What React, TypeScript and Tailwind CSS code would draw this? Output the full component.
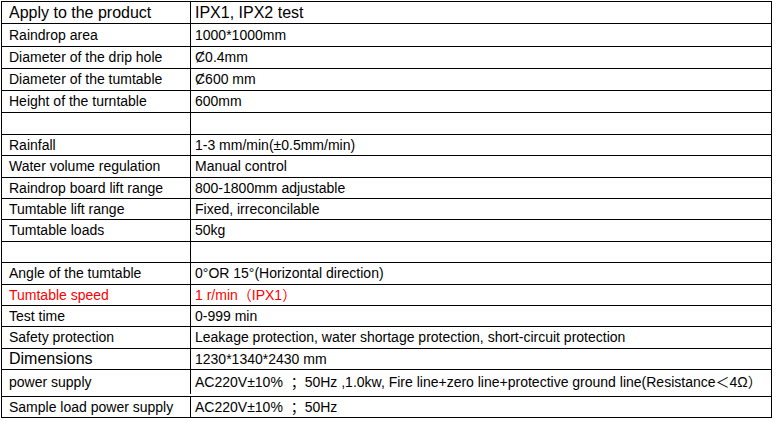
const rows: { label: string; value: string; h: string; big?: boolean; bigValue?: boolean; red?: boolean }[] = [
  { label: 'Apply to the product', value: 'IPX1, IPX2 test', h: 'h-[22px]', big: true, bigValue: true },
  { label: 'Raindrop area', value: '1000*1000mm', h: 'h-[23px]' },
  { label: 'Diameter of the drip hole', value: 'Ȼ0.4mm', h: 'h-[22px]' },
  { label: 'Diameter of the tumtable', value: 'Ȼ600 mm', h: 'h-[22px]' },
  { label: 'Height of the turntable', value: '600mm', h: 'h-[22px]' },
  { label: '', value: '', h: 'h-[22px]' },
  { label: 'Rainfall', value: '1-3 mm/min(±0.5mm/min)', h: 'h-[21px]' },
  { label: 'Water volume regulation', value: 'Manual control', h: 'h-[22px]' },
  { label: 'Raindrop board lift range', value: '800-1800mm adjustable', h: 'h-[21px]' },
  { label: 'Tumtable lift range', value: 'Fixed, irreconcilable', h: 'h-[21px]' },
  { label: 'Tumtable loads', value: '50kg', h: 'h-[22px]' },
  { label: '', value: '', h: 'h-[21px]' },
  { label: 'Angle of the tumtable', value: '0°OR 15°(Horizontal direction)', h: 'h-[22px]' },
  { label: 'Tumtable speed', value: '1 r/min（IPX1）', h: 'h-[21px]', red: true },
  { label: 'Test time', value: '0-999 min', h: 'h-[21px]' },
  { label: 'Safety protection', value: 'Leakage protection, water shortage protection, short-circuit protection', h: 'h-[22px]' },
  { label: 'Dimensions', value: '1230*1340*2430 mm', h: 'h-[21px]', big: true },
  {
    label: 'power supply',
    value: 'AC220V±10% \u00a0；50Hz ,1.0kw, Fire line+zero line+protective ground line(Resistance＜4Ω）',
    h: 'h-[27px] pb-[2px]',
  },
  { label: 'Sample load power supply', value: 'AC220V±10% \u00a0；50Hz', h: 'h-[21px]' },
];

export default function App() {
  return (
    <div className="w-[776px] h-[421px] bg-white overflow-hidden pt-[1px] pl-[1px] font-['Liberation_Sans','Noto_Sans_CJK_SC',sans-serif] text-black">
      <div className="w-[771px] border-l border-r border-t border-black">
        {rows.map((row, i) => (
          <div key={i} className={`flex border-b border-black ${row.h} ${row.red ? 'text-[#ff0000]' : ''}`}>
            <div className={`w-[189px] shrink-0 border-r border-black pl-[7px] flex items-center whitespace-nowrap ${row.big ? 'text-[16px]' : 'text-[14px]'}`}>
              {row.label}
            </div>
            <div className={`flex-1 pl-[4px] flex items-center whitespace-nowrap ${row.bigValue ? 'text-[16px]' : 'text-[14px]'}`}>
              {row.value}
            </div>
          </div>
        ))}
      </div>
    </div>
  );
}
